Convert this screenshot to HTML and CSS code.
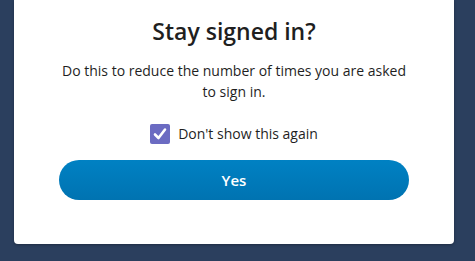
FILE: index.html
```html
<!DOCTYPE html>
<html>
<head>
<meta charset="utf-8">
<link rel="stylesheet" href="styles.css">
</head>
<body>
<div class="card">
  <h1 class="title">Stay signed in?</h1>
  <p class="desc">Do this to reduce the number of times you are asked to sign in.</p>
  <label class="check">
    <span class="box"><svg width="14" height="14" viewBox="0 0 14 14"><path d="M2 7.5 L5.5 11 L12 2.5" fill="none" stroke="#fff" stroke-width="2.6" stroke-linecap="round" stroke-linejoin="round"/></svg></span>
    <span class="label">Don't show this again</span>
  </label>
  <button class="yes">Yes</button>
</div>
</body>
</html>
```
FILE: styles.css
```css
html, body {
  margin: 0;
  padding: 0;
  background: #2b3f5e;
  height: 261px;
  overflow: hidden;
}
.card {
  margin-left: 14px;
  width: 440px;
  height: 244px;
  background: #fff;
  border-radius: 0 0 4px 4px;
  box-shadow: 0 1px 3px rgba(0,0,0,0.3);
  display: flex;
  flex-direction: column;
  align-items: center;
  font-family: "Open Sans", "Noto Sans", sans-serif;
  color: #1f1f1f;
  box-sizing: border-box;
  padding-top: 14px;
}
.title {
  margin: 0;
  font-size: 23px;
  font-weight: 600;
  line-height: 34px;
}
.desc {
  margin: 12px 0 0;
  width: 360px;
  text-align: center;
  font-size: 14px;
  line-height: 21px;
}
.check {
  margin-top: 22px;
  display: flex;
  align-items: center;
  gap: 8px;
}
.box {
  width: 20px;
  height: 20px;
  border-radius: 2px;
  background: #6b6bc2;
  display: flex;
  align-items: center;
  justify-content: center;
}
.label {
  font-size: 14px;
  line-height: 20px;
}
.yes {
  margin-top: 16px;
  width: 350px;
  height: 40px;
  border: none;
  border-radius: 20px;
  background: linear-gradient(#0081c3, #0073b1);
  color: #fff;
  font-family: "Open Sans", "Noto Sans", sans-serif;
  font-size: 15px;
  font-weight: 600;
}
```
